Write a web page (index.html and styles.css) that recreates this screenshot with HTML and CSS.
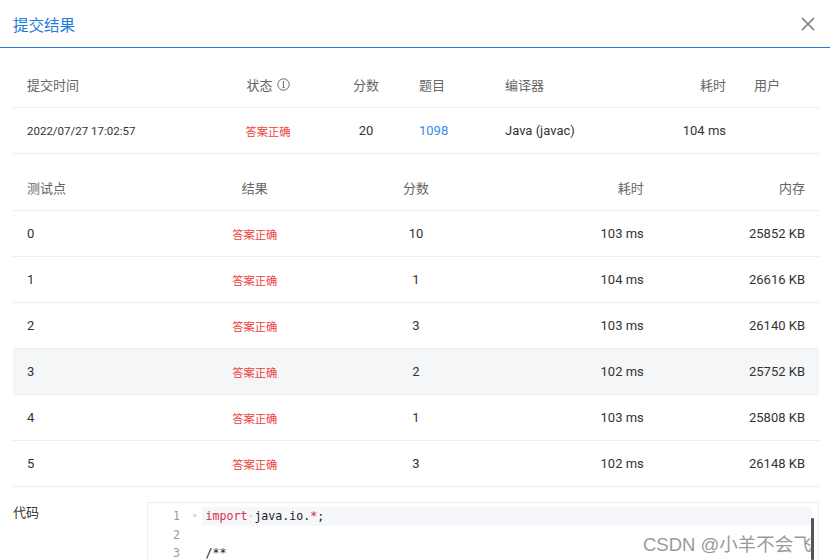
FILE: index.html
```html
<!DOCTYPE html>
<html lang="zh-CN">
<head>
<meta charset="utf-8">
<title>提交结果</title>
<link rel="stylesheet" href="styles.css">
</head>
<body>
<header class="dlg-head">
  <span class="dlg-title">提交结果</span>
  <button class="close" aria-label="关闭">
    <svg width="14" height="14" viewBox="0 0 14 14"><path d="M1 1L13 13M13 1L1 13" stroke="#7a7a7a" stroke-width="1.6" fill="none"/></svg>
  </button>
</header>
<main class="content">
  <section class="tbl t1">
    <div class="row head">
      <div class="cell">提交时间</div>
      <div class="cell c">状态 <svg class="info" width="13" height="13" viewBox="0 0 13 13"><circle cx="6.5" cy="6.5" r="5.7" stroke="#6a6a6a" stroke-width="1" fill="none"/><circle cx="6.5" cy="3.9" r="0.8" fill="#6a6a6a"/><path d="M6.5 5.6V9.6M5.4 9.6H7.6M5.6 5.6H6.5" stroke="#6a6a6a" stroke-width="1" fill="none"/></svg></div>
      <div class="cell c">分数</div>
      <div class="cell">题目</div>
      <div class="cell">编译器</div>
      <div class="cell r">耗时</div>
      <div class="cell">用户</div>
    </div>
    <div class="row">
      <div class="cell date">2022/07/27 17:02:57</div>
      <div class="cell c ok">答案正确</div>
      <div class="cell c">20</div>
      <div class="cell link">1098</div>
      <div class="cell">Java (javac)</div>
      <div class="cell r">104 ms</div>
      <div class="cell"></div>
    </div>
  </section>
  <section class="tbl t2">
    <div class="row head">
      <div class="cell">测试点</div>
      <div class="cell c">结果</div>
      <div class="cell c">分数</div>
      <div class="cell r">耗时</div>
      <div class="cell r">内存</div>
    </div>
    <div class="row"><div class="cell">0</div><div class="cell c ok">答案正确</div><div class="cell c">10</div><div class="cell r">103 ms</div><div class="cell r">25852 KB</div></div>
    <div class="row"><div class="cell">1</div><div class="cell c ok">答案正确</div><div class="cell c">1</div><div class="cell r">104 ms</div><div class="cell r">26616 KB</div></div>
    <div class="row"><div class="cell">2</div><div class="cell c ok">答案正确</div><div class="cell c">3</div><div class="cell r">103 ms</div><div class="cell r">26140 KB</div></div>
    <div class="row hl"><div class="cell">3</div><div class="cell c ok">答案正确</div><div class="cell c">2</div><div class="cell r">102 ms</div><div class="cell r">25752 KB</div></div>
    <div class="row"><div class="cell">4</div><div class="cell c ok">答案正确</div><div class="cell c">1</div><div class="cell r">103 ms</div><div class="cell r">25808 KB</div></div>
    <div class="row"><div class="cell">5</div><div class="cell c ok">答案正确</div><div class="cell c">3</div><div class="cell r">102 ms</div><div class="cell r">26148 KB</div></div>
  </section>
  <section class="code-sec">
    <div class="code-label">代码</div>
    <div class="code-box">
      <div class="line active"><span class="ln">1</span><span class="fold">▾</span><span class="src"><span class="kw">import</span><span class="ws">·</span>java.io.<span class="kw">*</span>;</span></div>
      <div class="line"><span class="ln">2</span><span class="fold"></span><span class="src"></span></div>
      <div class="line"><span class="ln">3</span><span class="fold"></span><span class="src">/**</span></div>
      <div class="scrollbar"></div>
    </div>
  </section>
</main>
<div class="watermark">CSDN @小羊不会飞</div>
</body>
</html>
```
FILE: styles.css
```css
html, body {
  margin: 0;
  height: 100%;
  overflow: hidden;
  background: #fff;
}
body {
  font-family: Roboto, "Noto Sans CJK SC", sans-serif;
  font-size: 13px;
  color: #333;
  position: relative;
}
.dlg-head {
  height: 47px;
  border-bottom: 1px solid #2a7ad8;
  display: flex;
  align-items: center;
  justify-content: space-between;
  padding: 0 14px 0 13px;
}
.dlg-title {
  font-size: 15.5px;
  color: #1f7ae0;
}
.close {
  border: 0;
  background: none;
  padding: 0;
  width: 16px;
  height: 16px;
  display: flex;
  align-items: center;
  justify-content: center;
}
.content {
  padding: 14px 11px 0 13px;
}
.row {
  display: grid;
  height: 46px;
  box-sizing: border-box;
  border-bottom: 1px solid #ebeef5;
  align-items: center;
}
.t1 .row {
  grid-template-columns: 196px 118px 78px 86px 163px 86px 79px;
}
.t2 {
  margin-top: 11px;
}
.t2 .row {
  grid-template-columns: repeat(5, 1fr);
}
.cell {
  padding: 0 14px;
  white-space: nowrap;
}
.c { text-align: center; }
.r { text-align: right; }
.head .cell {
  color: #666;
}
.info {
  vertical-align: -1px;
  margin-left: 1px;
}
.ok {
  color: #ee3f3f;
  font-size: 11.3px;
}
.date {
  font-size: 11.5px;
}
.link {
  color: #3b8cf2;
}
.hl {
  background: #f5f6f8;
}
.code-sec {
  display: flex;
  margin-top: 15px;
}
.code-label {
  width: 134px;
  flex: none;
  padding-top: 2px;
  line-height: 18px;
  color: #333;
}
.code-box {
  flex: 1;
  position: relative;
  border: 1px solid #eceef2;
  border-bottom: 0;
  padding-top: 4px;
  height: 53px;
  overflow: hidden;
  font-family: "DejaVu Sans Mono", monospace;
  font-size: 11.6px;
}
.line {
  display: flex;
  height: 18.7px;
  line-height: 18.7px;
}
.ln {
  width: 32px;
  text-align: right;
  color: #999;
  flex: none;
}
.fold {
  width: 22px;
  flex: none;
  text-align: right;
  padding-right: 5px;
  box-sizing: border-box;
  color: #c4c4c4;
  font-size: 8px;
}
.src {
  flex: 1;
  padding-left: 3.5px;
  color: #222;
  white-space: pre;
}
.active .src {
  background: #f5f7fa;
  margin-right: 6px;
}
.kw { color: #d5304a; }
.ws { color: #c8c8c8; }
.scrollbar {
  position: absolute;
  right: 4px;
  top: 15px;
  width: 3px;
  height: 42px;
  background: #555;
  border-radius: 1px;
}
.watermark {
  position: absolute;
  left: 643px;
  top: 530px;
  font-family: "Liberation Sans", "Noto Sans CJK SC", sans-serif;
  font-size: 18.5px;
  color: #9a9a9a;
  white-space: nowrap;
}
```
